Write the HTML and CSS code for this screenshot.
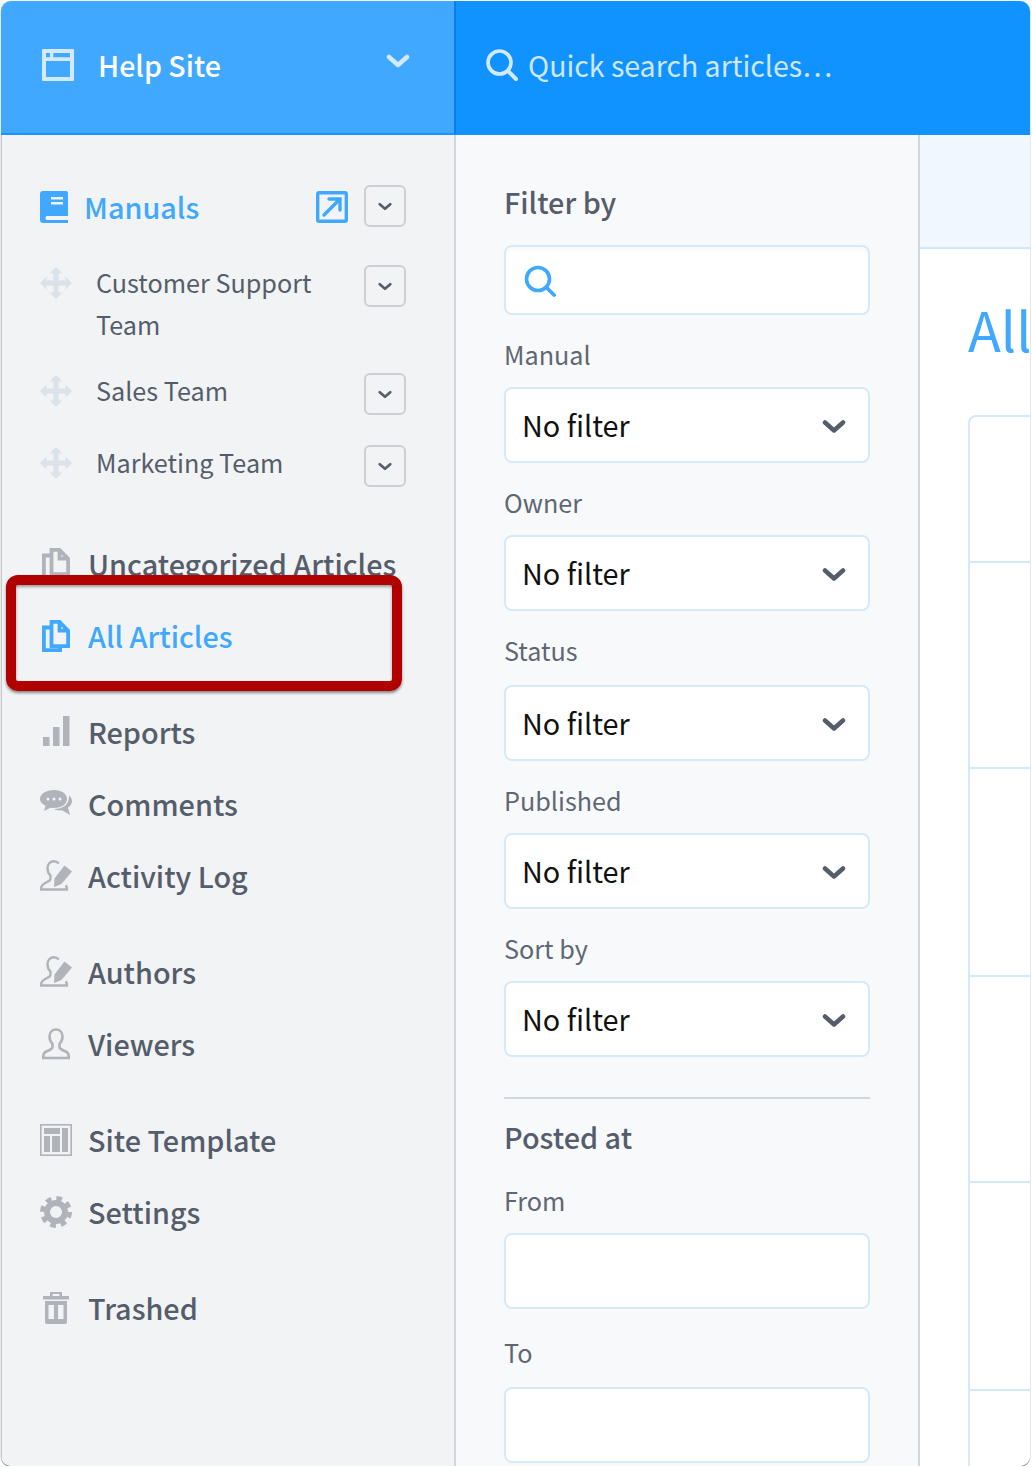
FILE: index.html
```html
<!DOCTYPE html>
<html lang="en">
<head>
<meta charset="utf-8">
<title>Help Site</title>
<link rel="stylesheet" href="styles.css">
</head>
<body>
<svg class="defs" width="0" height="0" aria-hidden="true">
  <defs>
    <symbol id="chev" viewBox="0 0 24 14"><path d="M3 3l9 8 9-8" fill="none" stroke="currentColor" stroke-width="4.500" stroke-linecap="round" stroke-linejoin="round"/></symbol>
    <symbol id="move" viewBox="0 0 32 32"><path fill="currentColor" d="M16 0l6.500 6.500H18.500V13.500H25.500V9.500L32 16l-6.500 6.500V18.500H18.500V25.500h4L16 32l-6.500-6.500h4V18.500H6.500v4L0 16l6.500-6.500v4h7V6.500h-4z"/></symbol>
    <symbol id="copy" viewBox="0 0 28 32"><path fill="none" stroke="currentColor" stroke-width="3.800" d="M9.500 1.900h8l8.600 8.800v15.400H9.500zM17.500 1.900v8.800h8.600M9.500 7.500H1.900v22.600h16.200v-4"/></symbol>
    <symbol id="author" viewBox="0 0 32 32"><path fill="none" stroke="currentColor" stroke-width="2.400" d="M19 3.500C17.500 2 16 1.200 14 1.200c-4 0-6.500 3-6.500 7 0 3 1 5.500 3 7.500v3c0 1-1 2-3 3l-3.500 2c-1.500.8-3 2-3 5.800h26c0-1.800-.4-3.200-1.300-4.300"/><path fill="currentColor" d="M24.500 5.500L32 11.500 21.500 24l-7.500 3 .5-8.500z"/></symbol>
    <symbol id="viewer" viewBox="0 0 28 32"><path fill="none" stroke="currentColor" stroke-width="2.600" d="M14 1.500c-4 0-6.500 3-6.500 7 0 3 1 5.500 3 7.500v3c0 1-1 2-3 3l-4 2c-1.800.9-2.300 2.500-2.300 6h25.600c0-3.500-.5-5.100-2.300-6l-4-2c-2-1-3-2-3-3v-3c2-2 3-4.500 3-7.500 0-4-2.500-7-6.500-7z"/></symbol>
  </defs>
</svg>

<div class="frame">
  <header class="topbar">
    <div class="site">
      <svg class="site-icon" viewBox="0 0 32 32"><path fill="currentColor" fill-rule="evenodd" d="M1 0h30a1 1 0 0 1 1 1v30a1 1 0 0 1-1 1H1a1 1 0 0 1-1-1V1a1 1 0 0 1 1-1zm3 4v4.300h4V4zm7.300 0v4.300H28V4zM4 12v16h24V12z"/></svg>
      <span class="site-name">Help Site</span>
      <svg class="site-chev"><use href="#chev"/></svg>
    </div>
    <div class="quick">
      <svg class="quick-icon" viewBox="0 0 32 32"><circle cx="13.500" cy="13.500" r="11.500" fill="none" stroke="currentColor" stroke-width="3.600"/><path d="M22 22l8 8" stroke="currentColor" stroke-width="4" stroke-linecap="round"/></svg>
      <span class="quick-text">Quick search articles…</span>
    </div>
  </header>

  <div class="body">
    <nav class="sidebar">
      <div class="manuals">
        <svg class="ico-32 blue drop" viewBox="0 0 32 32"><path fill="currentColor" fill-rule="evenodd" d="M3 0h23a2 2 0 0 1 2 2v23H6.500a2.500 2.500 0 0 0 0 4H28v3H3a3 3 0 0 1-3-3V3a3 3 0 0 1 3-3zm8 6v2.500h12V6zm0 5v2.500h12V11z"/></svg>
        <span class="manuals-title">Manuals</span>
        <svg class="ico-32 blue ext drop" viewBox="0 0 32 32"><rect x="1.700" y="1.700" width="28.600" height="28.600" rx="1.500" fill="none" stroke="currentColor" stroke-width="3.400"/><path d="M8 24L23 9M13 8h11v11" fill="none" stroke="currentColor" stroke-width="3.400" stroke-linecap="round"/></svg>
        <button class="caret"><svg class="caret-chev"><use href="#chev"/></svg></button>
      </div>
      <div class="sub">
        <svg class="ico-32 pale"><use href="#move"/></svg>
        <span class="sub-text">Customer Support Team</span>
        <button class="caret"><svg class="caret-chev"><use href="#chev"/></svg></button>
      </div>
      <div class="sub">
        <svg class="ico-32 pale"><use href="#move"/></svg>
        <span class="sub-text">Sales Team</span>
        <button class="caret"><svg class="caret-chev"><use href="#chev"/></svg></button>
      </div>
      <div class="sub">
        <svg class="ico-32 pale"><use href="#move"/></svg>
        <span class="sub-text">Marketing Team</span>
        <button class="caret"><svg class="caret-chev"><use href="#chev"/></svg></button>
      </div>

      <div class="group group-first">
        <a class="item"><svg class="ico-copy"><use href="#copy"/></svg><span>Uncategorized Articles</span></a>
        <a class="item item-active"><svg class="ico-copy"><use href="#copy"/></svg><span>All Articles</span></a>
      </div>
      <div class="group">
        <a class="item">
          <svg class="ico-32" viewBox="0 0 32 32"><path fill="currentColor" d="M3 21h6.500v9H3zM13 11h6.500v19H13zM23 0h6.500v30H23z"/></svg>
          <span>Reports</span>
        </a>
        <a class="item">
          <svg class="ico-32" viewBox="0 0 32 32"><path fill="currentColor" fill-rule="evenodd" d="M14 2c7.500 0 13 3.800 13 9s-5.500 9-13 9c-1.200 0-2.400-.1-3.500-.3L4 23l1.500-5.200C2 16 0 13.700 0 11 0 5.800 6.500 2 14 2zM8 9.500a1.500 1.500 0 1 0 0 3 1.500 1.500 0 0 0 0-3zm6 0a1.500 1.500 0 1 0 0 3 1.500 1.500 0 0 0 0-3zm6 0a1.500 1.500 0 1 0 0 3 1.500 1.500 0 0 0 0-3z"/><path fill="currentColor" d="M29 7.500c2 1.700 3 3.600 3 5.800 0 2.600-1.400 4.800-4 6.300L30 27l-8-4.700c-3 .3-6-.1-8.500-1.300 8 .3 16-3.400 15.500-13.500z"/></svg>
          <span>Comments</span>
        </a>
        <a class="item">
          <svg class="ico-32"><use href="#author"/></svg>
          <span>Activity Log</span>
        </a>
      </div>
      <div class="group">
        <a class="item"><svg class="ico-32"><use href="#author"/></svg><span>Authors</span></a>
        <a class="item"><svg class="ico-viewer"><use href="#viewer"/></svg><span>Viewers</span></a>
      </div>
      <div class="group">
        <a class="item">
          <svg class="ico-32" viewBox="0 0 32 32"><rect x=".8" y=".8" width="30.400" height="30.400" fill="none" stroke="currentColor" stroke-width="1.600"/><path fill="currentColor" d="M4 4h16v6H4zM4 12h6v16H4zM12 12h8v16h-8zM22 4h6v24h-6z"/></svg>
          <span>Site Template</span>
        </a>
        <a class="item">
          <svg class="ico-32" viewBox="0 0 32 32"><circle cx="16" cy="16" r="9" fill="none" stroke="currentColor" stroke-width="6"/><circle cx="16" cy="16" r="13.500" fill="none" stroke="currentColor" stroke-width="5" stroke-dasharray="5.600 5"/></svg>
          <span>Settings</span>
        </a>
      </div>
      <div class="group">
        <a class="item">
          <svg class="ico-32" viewBox="0 0 32 32"><path fill="currentColor" fill-rule="evenodd" d="M10 0h12v4h7v3.500H3V4h7zm2.500 2v2h7V2zM5 9h22v21a2 2 0 0 1-2 2H7a2 2 0 0 1-2-2zm3.500 4v14H14V13zm9.500 0v14h5.500V13z"/></svg>
          <span>Trashed</span>
        </a>
      </div>
      <div class="callout"></div>
    </nav>

    <section class="filters">
      <h3 class="filter-title">Filter by</h3>
      <div class="field-box search-box">
        <svg class="search-icon" viewBox="0 0 32 32"><circle cx="14" cy="14" r="11.500" fill="none" stroke="currentColor" stroke-width="3.600"/><path d="M22.500 22.500l7.500 7.500" stroke="currentColor" stroke-width="3.800" stroke-linecap="round"/></svg>
      </div>
      <label class="label label-first">Manual</label>
      <div class="field-box select"><span>No filter</span><svg class="select-chev"><use href="#chev"/></svg></div>
      <label class="label">Owner</label>
      <div class="field-box select"><span>No filter</span><svg class="select-chev"><use href="#chev"/></svg></div>
      <label class="label label-wide">Status</label>
      <div class="field-box select"><span>No filter</span><svg class="select-chev"><use href="#chev"/></svg></div>
      <label class="label">Published</label>
      <div class="field-box select"><span>No filter</span><svg class="select-chev"><use href="#chev"/></svg></div>
      <label class="label">Sort by</label>
      <div class="field-box select"><span>No filter</span><svg class="select-chev"><use href="#chev"/></svg></div>
      <hr class="rule">
      <h3 class="posted">Posted at</h3>
      <label class="label label-from">From</label>
      <div class="field-box date"></div>
      <label class="label label-to">To</label>
      <div class="field-box date"></div>
    </section>

    <main class="main">
      <div class="band"></div>
      <h1 class="page-title">All Articles</h1>
      <div class="list">
        <div class="row row-a"></div>
        <div class="row row-b"></div>
        <div class="row row-c"></div>
        <div class="row row-b"></div>
        <div class="row row-c"></div>
        <div class="row"></div>
      </div>
    </main>
  </div>
</div>
</body>
</html>
```
FILE: styles.css
```css
* { box-sizing: border-box; }
html, body { margin: 0; padding: 0; background: #fff; }
body { font-family: "Noto Sans CJK SC", "Source Sans Pro", "Noto Sans", sans-serif; }
.defs { position: absolute; }

.frame {
  margin: 1px 1px 0 1px;
  width: 1029px;
  height: 1465px;
  border-radius: 10px;
  overflow: hidden;
  display: flex;
  flex-direction: column;
  background: #fff;
  box-shadow: 0 1px 1px rgba(0,0,0,.55), 0 0 1px rgba(0,0,0,.35);
}

.topbar { display: flex; height: 134px; flex: none; }
.site {
  width: 455px;
  flex: none;
  display: flex;
  align-items: flex-start;
  background: #40a8ff;
  border-bottom: 2px solid #1a94ff;
  border-right: 2px solid #0a80e6;
  padding-left: 41px;
  color: #fff;
  position: relative;
}
.site-icon { width: 32px; height: 32px; margin-top: 48px; color: #d3e9fd; flex: none; }
.site-name { margin-left: 24px; margin-top: 43px; font-size: 28.600px; line-height: 42px; font-weight: 500; }
.site-chev { position: absolute; left: 385px; top: 52px; width: 24px; height: 16px; color: #d3e9fd; }
.quick { flex: 1; background: #1093ff; display: flex; align-items: flex-start; padding-left: 30px; }
.quick-icon { width: 32px; height: 32px; margin-top: 48px; color: #d3e9fd; flex: none; }
.quick-text { margin-left: 10px; margin-top: 43px; font-size: 28.500px; line-height: 42px; color: #cfe7ff; }

.body { display: flex; flex: 1; min-height: 0; }
.sidebar {
  width: 455px;
  flex: none;
  position: relative;
  background: #f1f3f5;
  border-right: 2px solid #d0d7de;
  border-left: 1px solid #c4c8cc;
  padding: 35px 48px 0 38px;
  color: #555d6b;
}
.ico-32 { width: 32px; height: 32px; flex: none; color: #b0b3b9; }
.blue { color: #40a8ff; }
.pale { color: #dce2e9; }
.drop { margin-top: 2px; }
.ico-copy { width: 28px; height: 32px; margin-left: 2px; margin-right: 2px; flex: none; color: #b0b3b9; }
.ico-viewer { width: 28px; height: 32px; margin-left: 2px; margin-right: 2px; flex: none; color: #b0b3b9; }

.manuals { display: flex; align-items: center; height: 72px; margin-bottom: 6px; }
.manuals-title { margin-left: 12px; margin-top: 2px; flex: 1; font-size: 28.800px; line-height: 42px; font-weight: 500; color: #40a8ff; }
.ext { margin-right: 16px; }
.manuals .caret { margin-top: 0; }
.caret {
  width: 42px;
  height: 42px;
  padding: 0;
  flex: none;
  background: transparent;
  border: 2px solid #ccd0d4;
  border-radius: 6px;
  display: flex;
  align-items: center;
  justify-content: center;
  margin-top: 2px;
  color: #555d6b;
}
.caret-chev { width: 14px; height: 9px; }

.sub { display: flex; align-items: flex-start; min-height: 72px; padding: 15px 0 11px; }
.sub .ico-32 { margin-top: 4px; }
.sub-text { margin-left: 24px; margin-top: -2px; flex: 1; font-size: 25.200px; line-height: 42px; }

.group { margin-top: 24px; }
.group-first { margin-top: 28px; }
.item { display: flex; align-items: center; height: 72px; font-size: 28.800px; font-weight: 500; line-height: 42px; color: #555d6b; white-space: nowrap; }
.item > span { margin-left: 16px; padding-bottom: 2px; padding-top: 1px; }
.item-active { color: #40a8ff; }
.item-active .ico-copy { color: #40a8ff; }

.callout {
  position: absolute;
  left: 4px;
  top: 440px;
  width: 396px;
  height: 116px;
  border: 10px solid #b00000;
  border-radius: 12px;
  box-shadow: 0 2px 3px rgba(0,0,0,.45), inset 0 2px 3px rgba(0,0,0,.35);
}

.filters {
  width: 464px;
  flex: none;
  background: #f8f9fb;
  border-right: 2px solid #d0d7de;
  padding: 44px 48px 0 48px;
}
.filter-title, .posted { margin: 0; font-size: 28.800px; height: 48px; font-weight: 500; color: #555d6b; }
.filter-title { line-height: 45px; }
.posted { line-height: 48px; margin-top: 14px; }
.field-box {
  width: 366px;
  background: #fff;
  border: 2px solid #d6e9fb;
  border-radius: 8px;
}
.search-box { height: 70px; margin-top: 18px; padding: 18px 0 0 18px; box-shadow: inset 0 3px 4px rgba(0,0,0,.03); }
.search-icon { width: 32px; height: 32px; color: #40a8ff; display: block; }
.label { display: block; height: 42px; margin-top: 20px; margin-bottom: 10px; font-size: 25.200px; line-height: 38px; color: #5f6773; }
.label-wide { margin-bottom: 12px; }
.select {
  height: 76px;
  display: flex;
  align-items: center;
  justify-content: space-between;
  padding: 0 22px 0 16px;
  font-size: 28.800px;
  color: #111;
}
.select > span { padding-bottom: 1px; }
.select-chev { width: 24px; height: 15px; margin-top: 2px; color: #555d6b; }
.rule { margin: 40px 0 0; width: 366px; border: 0; border-top: 2px solid #d0d7de; }
.label-from { margin-top: 20px; }
.label-to { margin-top: 24px; margin-bottom: 12px; }
.date { height: 76px; }

.main { flex: 1; min-width: 0; overflow: hidden; background: #fff; }
.band { height: 114px; background: #f0f7ff; border-bottom: 2px solid #d0e6fa; }
.page-title { margin: 46px 0 0 48px; height: 70px; font-size: 54px; line-height: 68px; font-weight: 400; color: #40a8ff; white-space: nowrap; overflow: hidden; }
.list { margin: 50px 0 0 48px; border-left: 2px solid #d6e9fb; border-top: 2px solid #d6e9fb; border-top-left-radius: 8px; }
.row { height: 146px; border-bottom: 2px solid #d6e9fb; }
.row-b { height: 206px; }
.row-c { height: 208px; }
.row:last-child { border-bottom: 0; height: 120px; }
```
